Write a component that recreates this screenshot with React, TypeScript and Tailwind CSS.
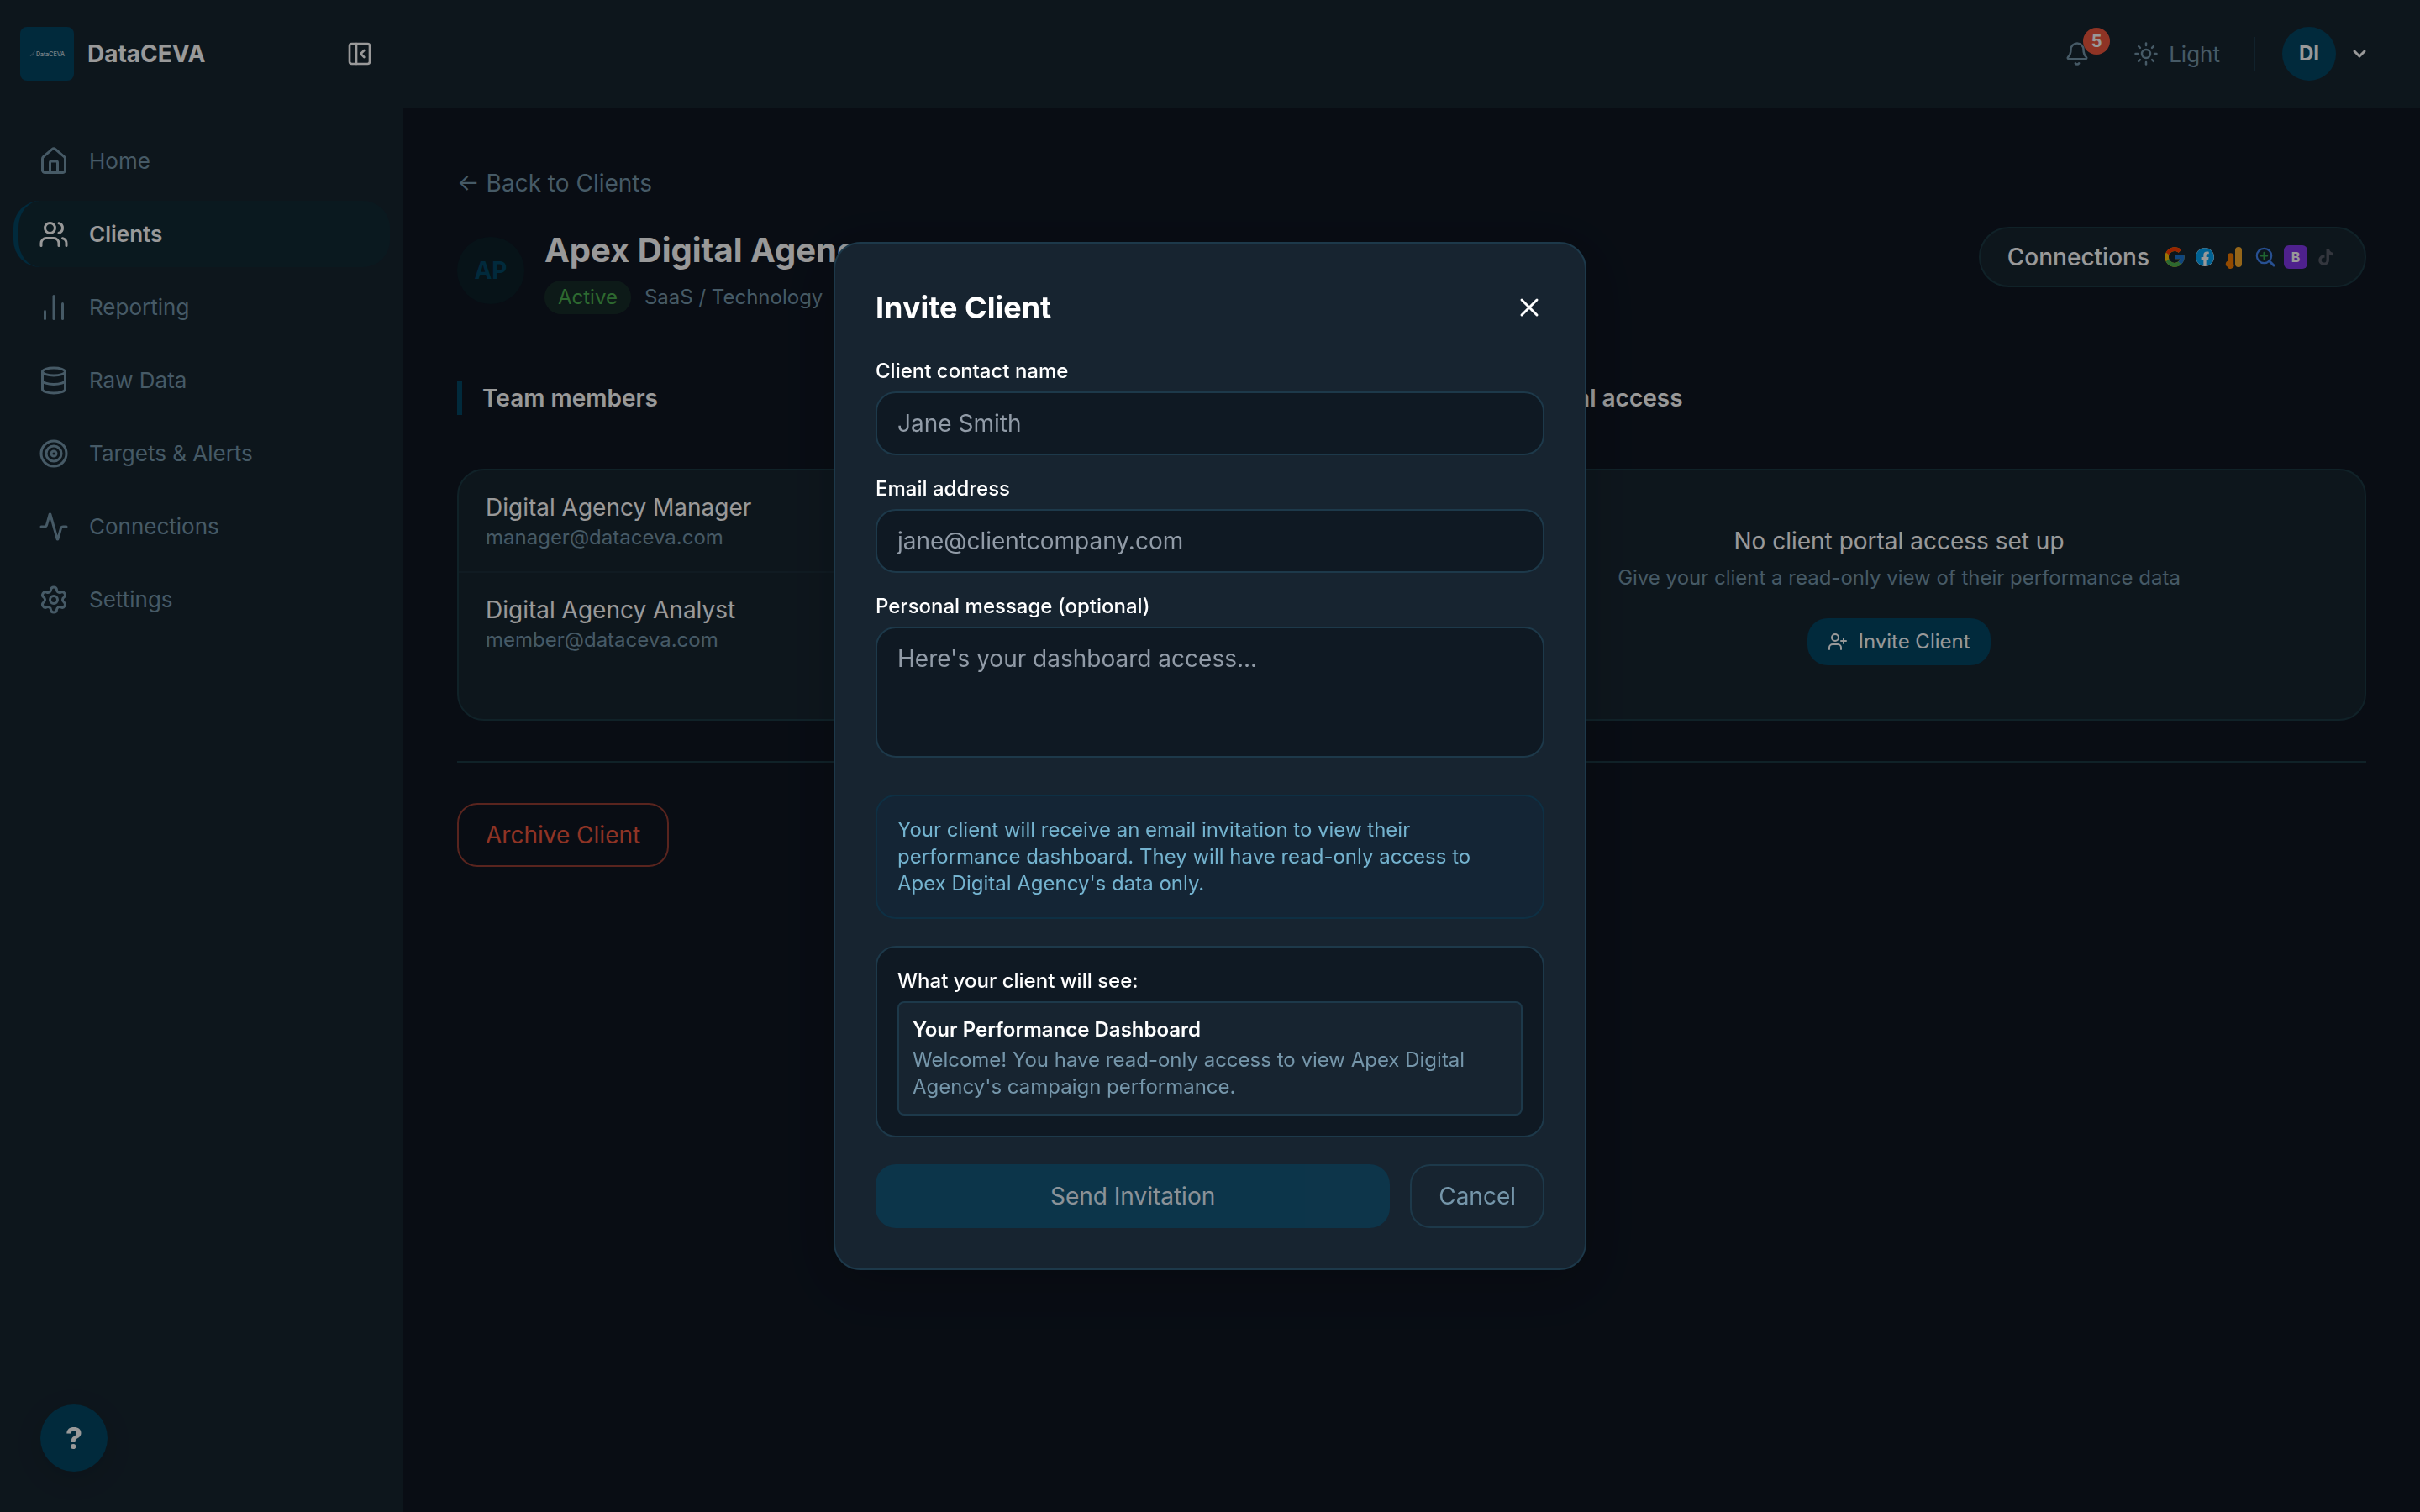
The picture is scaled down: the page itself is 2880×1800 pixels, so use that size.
import { useState } from 'react';
import type { ReactNode } from 'react';
import {
  Activity,
  Bell,
  ChartNoAxesColumn,
  ChevronDown,
  Database,
  House,
  PanelLeftClose,
  Settings,
  Sun,
  Target,
  UserPlus,
  Users,
  X,
} from 'lucide-react';
import { FaFacebook } from 'react-icons/fa';
import { FaTiktok } from 'react-icons/fa6';
import { FcGoogle } from 'react-icons/fc';

const navItems = [
  { label: 'Home', icon: House },
  { label: 'Clients', icon: Users, active: true },
  { label: 'Reporting', icon: ChartNoAxesColumn },
  { label: 'Raw Data', icon: Database },
  { label: 'Targets & Alerts', icon: Target },
  { label: 'Connections', icon: Activity },
  { label: 'Settings', icon: Settings },
];

const members = [
  { name: 'Digital Agency Manager', email: 'manager@dataceva.com' },
  { name: 'Digital Agency Analyst', email: 'member@dataceva.com' },
];

function Sidebar() {
  return (
    <aside className="w-[480px] shrink-0 bg-[#172530]">
      <div className="flex h-32 items-center px-6">
        <div className="flex size-16 items-center justify-center rounded-lg bg-[#034664]">
          <svg viewBox="0 0 8 8" className="size-2 text-[#7596aa]" fill="none" stroke="currentColor" aria-hidden="true">
            <path d="M1 7 L3.2 4.2 M3.4 4 L6.6 1 M3 6.4 L5 3.6" strokeWidth="0.8" />
          </svg>
          <span className="text-[7px] font-medium leading-none text-white/80">DataCEVA</span>
        </div>
        <span className="ml-4 text-[28px] font-bold leading-10 text-white">DataCEVA</span>
        <button type="button" aria-label="Collapse sidebar" className="ml-auto p-3 text-white">
          <PanelLeftClose size={32} />
        </button>
      </div>
      <nav className="flex flex-col gap-2 px-4 pt-6">
        {navItems.map(({ label, icon: Icon, active }) => (
          <a
            key={label}
            href="#"
            className={`flex items-center gap-6 rounded-[32px] border-l-[6px] px-6 py-5 text-[26px] leading-[39px] ${
              active
                ? 'border-[#034664] bg-[#122a35] font-semibold text-white'
                : 'border-transparent text-[#7596aa]'
            }`}
          >
            <Icon size={36} strokeWidth={2} />
            {label}
          </a>
        ))}
      </nav>
    </aside>
  );
}

function TopBar() {
  return (
    <header className="flex h-32 items-center justify-end bg-[#172530] pr-[60px] text-[26px]">
      <button type="button" aria-label="Notifications" className="relative mr-[52px] text-[#7596aa]">
        <Bell size={30} strokeWidth={2} />
        <span className="absolute -right-6 -top-4 flex size-8 items-center justify-center rounded-full bg-[#ee573e] text-xl font-bold leading-none text-white">
          5
        </span>
      </button>
      <button type="button" className="mr-10 flex items-center gap-3 leading-[39px] text-[#7596aa]">
        <Sun size={30} strokeWidth={2} />
        Light
      </button>
      <div className="mr-8 h-10 w-0.5 bg-[#1d394a]" />
      <button type="button" aria-label="Account menu" className="flex items-center gap-4 text-white">
        <span className="flex size-16 items-center justify-center rounded-full bg-[#034664] text-2xl font-bold">DI</span>
        <ChevronDown size={24} strokeWidth={3} />
      </button>
    </header>
  );
}

function SourceIcon({ children }: { children: ReactNode }) {
  return <span className="flex size-7 items-center justify-center">{children}</span>;
}

function ConnectionsPill() {
  return (
    <button
      type="button"
      className="flex h-[72px] items-center gap-4 rounded-full border-2 border-[#1c3944] bg-[#172530] px-8 text-[28px] font-medium text-white"
    >
      Connections
      <span className="flex gap-2">
        <SourceIcon>
          <FcGoogle size={28} />
        </SourceIcon>
        <SourceIcon>
          <span className="flex rounded-full bg-white text-[#00a3f5]">
            <FaFacebook size={22} />
          </span>
        </SourceIcon>
        <SourceIcon>
          <svg viewBox="0 0 28 28" className="size-7" aria-hidden="true">
            <rect x="14" y="2" width="8" height="24" rx="4" fill="#f9ab2b" />
            <path
              d="M5 12.8a3.6 3.6 0 0 1 7.200 0V22.300a3.700 3.700 0 0 1-7.400 3.200c-1.500-.6-2.200-1.800-2-3.400.1-1.600.9-2.700 2.200-3.300z"
              fill="#f57c00"
            />
          </svg>
        </SourceIcon>
        <SourceIcon>
          <svg viewBox="0 0 28 28" className="size-7" fill="none" strokeLinecap="round" aria-hidden="true">
            <circle cx="12.500" cy="12.500" r="8.700" stroke="#4285f4" strokeWidth="2.200" />
            <path d="M19 19l5 5" stroke="#4285f4" strokeWidth="3" />
            <path d="M12.500 8.800v7.400M8.800 12.500h7.400" stroke="#34a853" strokeWidth="2" />
          </svg>
        </SourceIcon>
        <SourceIcon>
          <span className="flex size-7 items-center justify-center rounded-md bg-[#8338ec] text-base font-bold leading-none">B</span>
        </SourceIcon>
        <SourceIcon>
          <FaTiktok size={20} className="text-[#555a66]" />
        </SourceIcon>
      </span>
    </button>
  );
}

function SectionHeading({ children }: { children: ReactNode }) {
  return (
    <h2 className="mb-16 border-l-[6px] border-[#034664] pl-6 text-[28px] font-semibold leading-10 text-white">{children}</h2>
  );
}

function ClientPage({ onInvite }: { onInvite: () => void }) {
  return (
    <main className="flex-1 px-16 pt-[70px]">
      <a href="#" className="mb-8 inline-block text-[28px] leading-10 text-[#7596aa]">
        ← Back to Clients
      </a>
      <div className="mb-20 flex items-start justify-between">
        <div className="flex items-center gap-6">
          <div className="flex size-20 items-center justify-center rounded-full bg-[#0c2029] text-[28px] font-bold text-[#034664]">
            AP
          </div>
          <div>
            <h1 className="mb-2 text-[40px] font-bold leading-[56px] text-white">Apex Digital Agency</h1>
            <div className="flex items-center gap-4 text-2xl">
              <span className="rounded-full bg-[#4caf50]/15 px-4 leading-10 text-[#4caf50]">Active</span>
              <span className="text-[#7596aa]">SaaS / Technology</span>
            </div>
          </div>
        </div>
        <ConnectionsPill />
      </div>

      <div className="grid grid-cols-2 gap-12">
        <section className="flex flex-col">
          <SectionHeading>Team members</SectionHeading>
          <ul className="flex-1 divide-y-2 divide-[#1b2d39] rounded-[32px] border-2 border-[#1c3944] bg-[#172530]">
            {members.map((member) => (
              <li key={member.email} className="px-8 py-6">
                <p className="text-[28px] leading-10 text-white">{member.name}</p>
                <p className="text-2xl text-[#7596aa]">{member.email}</p>
              </li>
            ))}
          </ul>
        </section>
        <section className="flex flex-col">
          <SectionHeading>Client portal access</SectionHeading>
          <div className="flex flex-1 flex-col items-center rounded-[32px] border-2 border-[#1c3944] bg-[#172530] py-16">
            <p className="mb-2 text-[28px] leading-10 text-white">No client portal access set up</p>
            <p className="mb-8 text-2xl text-[#7596aa]">Give your client a read-only view of their performance data</p>
            <button
              type="button"
              onClick={onInvite}
              className="flex h-14 items-center gap-3 rounded-3xl bg-[#034664] px-6 text-2xl text-white"
            >
              <UserPlus size={24} />
              Invite Client
            </button>
          </div>
        </section>
      </div>

      <hr className="my-12 border-t-2 border-[#1c3944]" />
      <button
        type="button"
        className="h-[76px] rounded-3xl border-2 border-[#ee573e]/60 px-8 text-[28px] text-[#ee573e]"
      >
        Archive Client
      </button>
    </main>
  );
}

const fieldClass =
  'block w-full rounded-3xl border-2 border-[#1d394a] bg-[#0f1923] px-6 py-4 text-[28px] leading-10 text-white placeholder:text-[#919ba7]';

function InviteModal({ onClose }: { onClose: () => void }) {
  const [name, setName] = useState('');
  const [email, setEmail] = useState('');
  const [message, setMessage] = useState('');

  return (
    <div className="fixed inset-0 z-50 flex items-center justify-center bg-black/40">
      <div
        role="dialog"
        aria-modal="true"
        aria-labelledby="invite-title"
        className="w-full max-w-4xl rounded-[32px] border-2 border-[#1d394a] bg-[#172430] p-12 shadow-[0_16px_64px_rgba(0,0,0,0.2)]"
      >
        <div className="mb-8 flex items-center justify-between text-white">
          <h2 id="invite-title" className="text-4xl font-bold leading-[56px]">
            Invite Client
          </h2>
          <button type="button" aria-label="Close" onClick={onClose}>
            <X size={36} />
          </button>
        </div>

        <form onSubmit={(e) => e.preventDefault()}>
          <label htmlFor="contact-name" className="mb-2 block text-2xl font-medium text-white">
            Client contact name
          </label>
          <input
            id="contact-name"
            type="text"
            value={name}
            onChange={(e) => setName(e.target.value)}
            placeholder="Jane Smith"
            className={fieldClass}
          />

          <label htmlFor="contact-email" className="mb-2 mt-6 block text-2xl font-medium text-white">
            Email address
          </label>
          <input
            id="contact-email"
            type="email"
            value={email}
            onChange={(e) => setEmail(e.target.value)}
            placeholder="jane@clientcompany.com"
            className={fieldClass}
          />

          <label htmlFor="message" className="mb-2 mt-6 block text-2xl font-medium text-white">
            Personal message (optional)
          </label>
          <textarea
            id="message"
            rows={3}
            value={message}
            onChange={(e) => setMessage(e.target.value)}
            placeholder="Here's your dashboard access..."
            className={`${fieldClass} resize-none`}
          />

          <p className="mt-11 rounded-3xl border-2 border-[#0e3044] bg-[#142535] p-6 text-2xl text-[#74b3cf]">
            Your client will receive an email invitation to view their performance dashboard. They will have read-only
            access to Apex Digital Agency's data only.
          </p>

          <div className="mt-8 rounded-3xl border-2 border-[#1d394a] bg-[#0f1923] p-6 text-2xl">
            <p className="mb-2 font-medium text-white">What your client will see:</p>
            <div className="rounded-lg border-2 border-[#1d394a] bg-[#172430] p-4">
              <p className="mb-1 font-semibold text-white">Your Performance Dashboard</p>
              <p className="text-[#7596aa]">
                Welcome! You have read-only access to view Apex Digital Agency's campaign performance.
              </p>
            </div>
          </div>

          <div className="mt-8 flex gap-6 text-[28px]">
            <button
              type="submit"
              disabled={!name || !email}
              className="h-[76px] flex-1 rounded-3xl bg-[#034664] text-white disabled:opacity-50"
            >
              Send Invitation
            </button>
            <button
              type="button"
              onClick={onClose}
              className="h-[76px] rounded-3xl border-2 border-[#1d394a] px-8 text-[#7596aa]"
            >
              Cancel
            </button>
          </div>
        </form>
      </div>
    </div>
  );
}

export default function App() {
  const [inviteOpen, setInviteOpen] = useState(true);

  return (
    <div className="flex min-h-screen bg-[#0f1622] font-['Inter',sans-serif]">
      <Sidebar />
      <div className="flex min-w-0 flex-1 flex-col">
        <TopBar />
        <ClientPage onInvite={() => setInviteOpen(true)} />
      </div>
      <button
        type="button"
        aria-label="Help"
        className="fixed bottom-12 left-12 flex size-20 items-center justify-center rounded-full bg-[#034664] text-4xl font-bold text-white shadow-[0_8px_32px_rgba(0,0,0,0.12)]"
      >
        ?
      </button>
      {inviteOpen && <InviteModal onClose={() => setInviteOpen(false)} />}
    </div>
  );
}
